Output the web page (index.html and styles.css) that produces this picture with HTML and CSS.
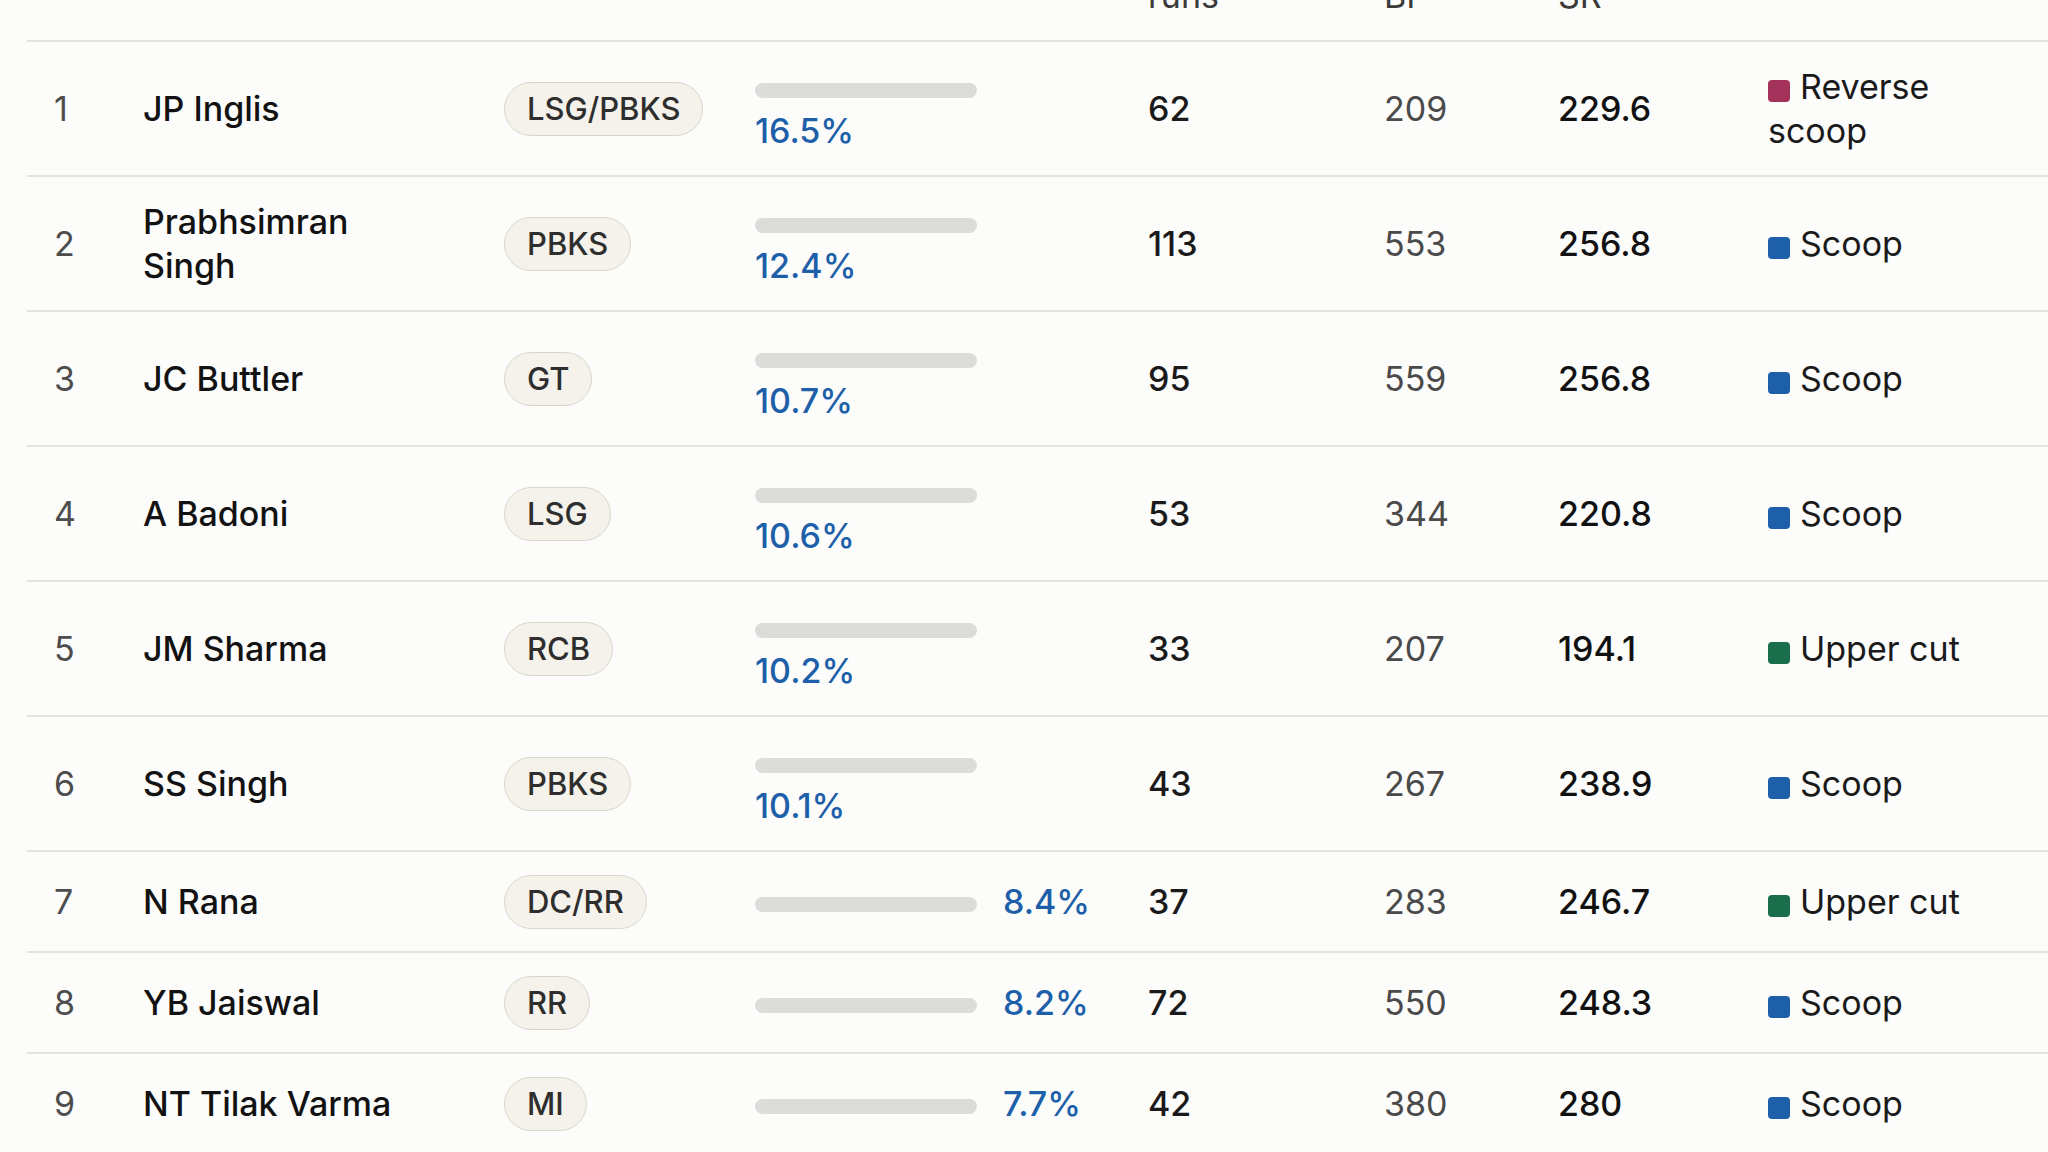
FILE: index.html
```html
<!DOCTYPE html>
<html lang="en">
<head>
<meta charset="utf-8">
<title>Scoop shot leaders</title>
<link rel="stylesheet" href="styles.css">
</head>
<body>
<div class="table">
  <div class="row row--head">
    <div class="cell rank"></div>
    <div class="cell name"></div>
    <div class="cell team"></div>
    <div class="cell share"></div>
    <div class="cell head-label">runs</div>
    <div class="cell head-label">BF</div>
    <div class="cell head-label">SR</div>
    <div class="cell shot"></div>
  </div>

  <div class="row">
    <div class="cell rank">1</div>
    <div class="cell name">JP Inglis</div>
    <div class="cell team"><span class="pill">LSG/PBKS</span></div>
    <div class="cell share share--stacked"><span class="bar"></span><span class="pct">16.5%</span></div>
    <div class="cell runs">62</div>
    <div class="cell bf">209</div>
    <div class="cell sr">229.6</div>
    <div class="cell shot"><span class="swatch swatch--reverse"></span>Reverse scoop</div>
  </div>

  <div class="row">
    <div class="cell rank">2</div>
    <div class="cell name">Prabhsimran Singh</div>
    <div class="cell team"><span class="pill">PBKS</span></div>
    <div class="cell share share--stacked"><span class="bar"></span><span class="pct">12.4%</span></div>
    <div class="cell runs">113</div>
    <div class="cell bf">553</div>
    <div class="cell sr">256.8</div>
    <div class="cell shot"><span class="swatch swatch--scoop"></span>Scoop</div>
  </div>

  <div class="row">
    <div class="cell rank">3</div>
    <div class="cell name">JC Buttler</div>
    <div class="cell team"><span class="pill">GT</span></div>
    <div class="cell share share--stacked"><span class="bar"></span><span class="pct">10.7%</span></div>
    <div class="cell runs">95</div>
    <div class="cell bf">559</div>
    <div class="cell sr">256.8</div>
    <div class="cell shot"><span class="swatch swatch--scoop"></span>Scoop</div>
  </div>

  <div class="row">
    <div class="cell rank">4</div>
    <div class="cell name">A Badoni</div>
    <div class="cell team"><span class="pill">LSG</span></div>
    <div class="cell share share--stacked"><span class="bar"></span><span class="pct">10.6%</span></div>
    <div class="cell runs">53</div>
    <div class="cell bf">344</div>
    <div class="cell sr">220.8</div>
    <div class="cell shot"><span class="swatch swatch--scoop"></span>Scoop</div>
  </div>

  <div class="row">
    <div class="cell rank">5</div>
    <div class="cell name">JM Sharma</div>
    <div class="cell team"><span class="pill">RCB</span></div>
    <div class="cell share share--stacked"><span class="bar"></span><span class="pct">10.2%</span></div>
    <div class="cell runs">33</div>
    <div class="cell bf">207</div>
    <div class="cell sr">194.1</div>
    <div class="cell shot"><span class="swatch swatch--upper"></span>Upper cut</div>
  </div>

  <div class="row">
    <div class="cell rank">6</div>
    <div class="cell name">SS Singh</div>
    <div class="cell team"><span class="pill">PBKS</span></div>
    <div class="cell share share--stacked"><span class="bar"></span><span class="pct">10.1%</span></div>
    <div class="cell runs">43</div>
    <div class="cell bf">267</div>
    <div class="cell sr">238.9</div>
    <div class="cell shot"><span class="swatch swatch--scoop"></span>Scoop</div>
  </div>

  <div class="row">
    <div class="cell rank">7</div>
    <div class="cell name">N Rana</div>
    <div class="cell team"><span class="pill">DC/RR</span></div>
    <div class="cell share"><span class="bar"></span><span class="pct">8.4%</span></div>
    <div class="cell runs">37</div>
    <div class="cell bf">283</div>
    <div class="cell sr">246.7</div>
    <div class="cell shot"><span class="swatch swatch--upper"></span>Upper cut</div>
  </div>

  <div class="row">
    <div class="cell rank">8</div>
    <div class="cell name">YB Jaiswal</div>
    <div class="cell team"><span class="pill">RR</span></div>
    <div class="cell share"><span class="bar"></span><span class="pct">8.2%</span></div>
    <div class="cell runs">72</div>
    <div class="cell bf">550</div>
    <div class="cell sr">248.3</div>
    <div class="cell shot"><span class="swatch swatch--scoop"></span>Scoop</div>
  </div>

  <div class="row">
    <div class="cell rank">9</div>
    <div class="cell name">NT Tilak Varma</div>
    <div class="cell team"><span class="pill">MI</span></div>
    <div class="cell share"><span class="bar"></span><span class="pct">7.7%</span></div>
    <div class="cell runs">42</div>
    <div class="cell bf">380</div>
    <div class="cell sr">280</div>
    <div class="cell shot"><span class="swatch swatch--scoop"></span>Scoop</div>
  </div>
</div>
</body>
</html>
```

FILE: styles.css
```css
* {
  box-sizing: border-box;
}

html,
body {
  margin: 0;
  padding: 0;
  background: #fcfcfb;
}

body {
  font-family: Inter, "Liberation Sans", sans-serif;
  font-size: 34px;
  line-height: 44px;
  color: #141414;
  overflow: hidden;
}

.table {
  margin: -26px 0 0 27px;
}

.row {
  display: grid;
  grid-template-columns: 89px 361px 251px 393px 236px 174px 210px 1fr;
  align-items: center;
  padding: 23px 0 22px 27px;
  border-top: 2px solid #e3e3e1;
}

.row--head {
  border-top: 0;
  padding: 0 0 22px 27px;
}

.head-label {
  color: #3a3a3a;
}

.rank {
  color: #4d4d4d;
}

.name {
  font-weight: 500;
  color: #121212;
  padding-right: 70px;
}

.team {
  display: flex;
}

.pill {
  display: inline-flex;
  align-items: center;
  height: 54px;
  padding: 0 22px;
  border: 1.5px solid #d9d6cc;
  border-radius: 27px;
  background: #f4f2eb;
  color: #2e2e2e;
  font-size: 31px;
  font-weight: 500;
}

.share {
  display: flex;
  align-items: center;
  gap: 26px;
}

.share--stacked {
  flex-direction: column;
  align-items: flex-start;
  gap: 11px;
  padding-top: 18px;
}

.bar {
  flex: none;
  width: 222px;
  height: 15px;
  border-radius: 8px;
  background: #dcdcda;
}

.share:not(.share--stacked) .bar {
  margin-top: 5px;
}

.pct {
  color: #1d5fa8;
  font-weight: 500;
}

.runs {
  color: #1a1a1a;
  font-weight: 500;
}

.bf {
  color: #4a4a4a;
}

.sr {
  color: #111;
  font-weight: 500;
}

.shot {
  color: #1a1a1a;
  padding-right: 48px;
}

.swatch {
  display: inline-block;
  width: 22px;
  height: 22px;
  border-radius: 4px;
  margin-right: 10px;
  vertical-align: -3px;
}

.swatch--reverse {
  background: #a3325a;
}

.swatch--scoop {
  background: #1d5fa8;
}

.swatch--upper {
  background: #1b6e4b;
}
```
